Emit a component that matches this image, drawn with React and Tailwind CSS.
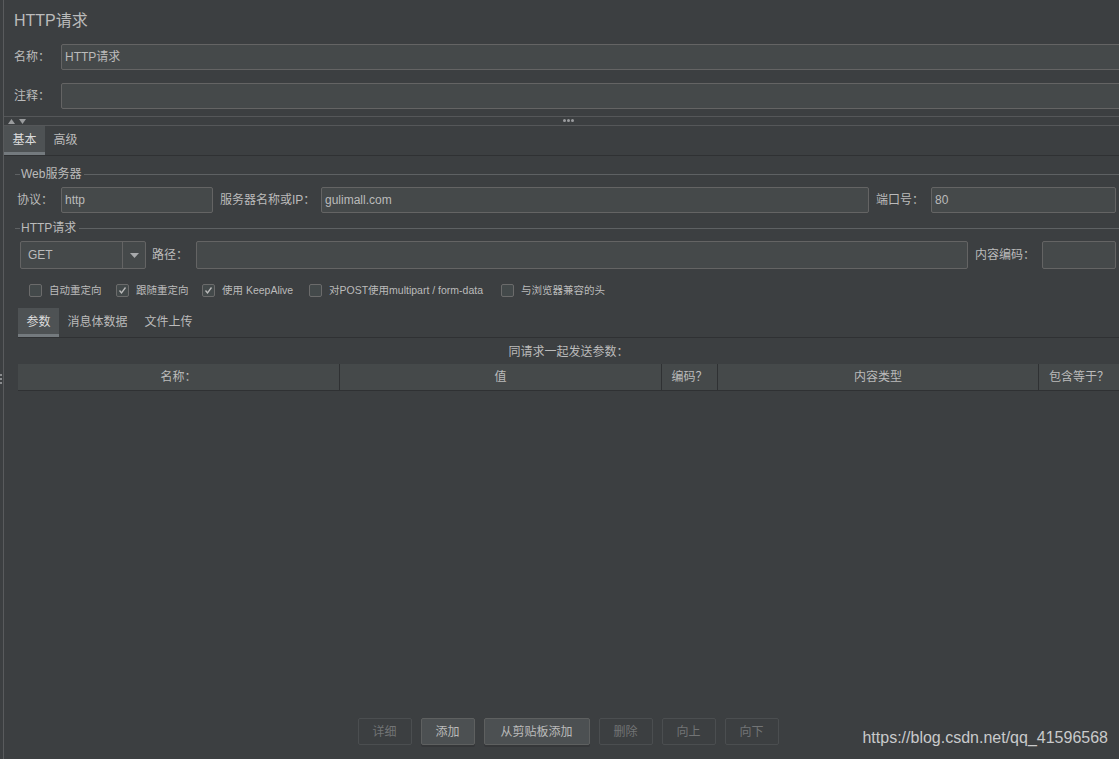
import React from 'react';

const Field = ({ className = '', value = '' }) => (
  <div className={`h-[26px] rounded-[2px] border border-[#646464] bg-[#45494a] px-[3px] text-[12px] leading-[24px] text-[#bbbbbb] ${className}`}>
    {value}
  </div>
);

const TitledLine = ({ title }) => (
  <div className="flex items-center h-[14px] pl-[11px]">
    <div className="w-[5px] h-px bg-[#5e6163]" />
    <span className="px-[1px] text-[12px] leading-[14px] text-[#bbbbbb]">{title}</span>
    <div className="flex-1 h-px bg-[#5e6163] ml-[2px]" />
  </div>
);

const Check = ({ checked, label, width }) => (
  <div className="flex items-center shrink-0" style={width ? { width } : undefined}>
    <div className="w-[13px] h-[13px] rounded-[2px] border border-[#6b6b6b] bg-[#43494a] flex items-center justify-center">
      {checked && (
        <svg width="9" height="9" viewBox="0 0 9 9">
          <path d="M1.5 4.5 L3.5 7 L7.5 1.5" fill="none" stroke="#bbbbbb" strokeWidth="1.3" />
        </svg>
      )}
    </div>
    <span className="ml-[7px] text-[10.5px] leading-[12px] text-[#bbbbbb] whitespace-nowrap">{label}</span>
  </div>
);

const Btn = ({ children, disabled, className = '' }) => (
  <div
    className={`h-[27px] rounded-[2px] border flex items-center justify-center text-[12px] ${
      disabled
        ? 'border-[#4b4e50] text-[#727475]'
        : 'border-[#5e6060] bg-[#4c5052] text-[#bbbbbb] shadow-[0_2px_0_#353739]'
    } ${className}`}
  >
    {children}
  </div>
);

export default function App() {
  const cols = [
    { label: '名称：', w: 'w-[321px]' },
    { label: '值', w: 'w-[322px]' },
    { label: '编码？', w: 'w-[56px]' },
    { label: '内容类型', w: 'w-[321px]' },
    { label: '包含等于？', w: 'flex-1' },
  ];

  return (
    <div className="relative w-[1119px] h-[759px] overflow-hidden bg-[#3c3f41] flex font-['Liberation_Sans','Noto_Sans_CJK_SC',sans-serif] text-[#bbbbbb]">
      {/* left gutter */}
      <div className="w-[3px] shrink-0" />
      <div className="w-px shrink-0 bg-[#595b5d]" />

      <div className="flex-1 flex flex-col min-w-0">
        <div className="pl-[10px] pt-[11px] h-[31px] text-[16px] leading-[20px]">HTTP请求</div>

        <div className="flex items-center mt-[13px] pl-[10px]">
          <span className="w-[47px] text-[12px]">名称：</span>
          <Field className="flex-1 mr-[-4px]" value="HTTP请求" />
        </div>
        <div className="flex items-center mt-[13px] pl-[10px]">
          <span className="w-[47px] text-[12px]">注释：</span>
          <Field className="flex-1 mr-[-4px]" />
        </div>

        {/* splitter */}
        <div className="h-px bg-[#555759] mt-[7px]" />
        <div className="h-[8px] relative flex items-center pl-[4px] gap-[4px]">
          <svg width="7" height="5" viewBox="0 0 7 5"><path d="M0 5 L3.5 0 L7 5Z" fill="#9a9c9e" /></svg>
          <svg width="7" height="5" viewBox="0 0 7 5"><path d="M0 0 L3.5 5 L7 0Z" fill="#9a9c9e" /></svg>
          <div className="absolute left-[559px] top-[2px] flex gap-[1px]">
            <div className="w-[3px] h-[3px] rounded-full bg-[#9a9c9e]" />
            <div className="w-[3px] h-[3px] rounded-full bg-[#9a9c9e]" />
            <div className="w-[3px] h-[3px] rounded-full bg-[#9a9c9e]" />
          </div>
        </div>
        <div className="h-px bg-[#555759]" />

        {/* main tabs */}
        <div className="flex h-[30px] border-b border-[#2f3133]">
          <div className="w-[41px] bg-[#4e5254] border-b-[3px] border-[#747a7e] text-center text-[12px] leading-[28px] text-[#dddddd]">基本</div>
          <div className="w-[41px] text-center text-[12px] leading-[28px]">高级</div>
        </div>

        <div className="mt-[11px]">
          <TitledLine title="Web服务器" />
        </div>
        <div className="flex items-center mt-[6px] pl-[13px] text-[12px]">
          <span className="w-[44px]">协议：</span>
          <Field className="w-[152px]" value="http" />
          <span className="ml-[7px] w-[101px]">服务器名称或IP：</span>
          <Field className="w-[548px]" value="gulimall.com" />
          <span className="ml-[7px] w-[55px]">端口号：</span>
          <Field className="w-[185px]" value="80" />
        </div>

        <div className="mt-[8px]">
          <TitledLine title="HTTP请求" />
        </div>
        <div className="flex items-center mt-[6px] pl-[16px] text-[12px]">
          <div className="w-[126px] h-[28px] rounded-[2px] border border-[#646464] bg-[#45494a] flex">
            <span className="flex-1 pl-[7px] leading-[26px]">GET</span>
            <div className="w-[23px] border-l border-[#646464] flex items-center justify-center">
              <svg width="9" height="5" viewBox="0 0 9 5"><path d="M0 0 L9 0 L4.5 5Z" fill="#a8aaac" /></svg>
            </div>
          </div>
          <span className="ml-[6px] w-[44px]">路径：</span>
          <Field className="w-[772px] h-[28px]" />
          <span className="ml-[7px] w-[67px]">内容编码：</span>
          <Field className="w-[74px] h-[28px]" />
        </div>

        <div className="flex items-center mt-[14px] pl-[25px] h-[14px]">
          <Check label="自动重定向" width={87} />
          <Check label="跟随重定向" checked width={86} />
          <Check label="使用 KeepAlive" checked width={107} />
          <Check label="对POST使用multipart / form-data" width={192} />
          <Check label="与浏览器兼容的头" />
        </div>

        {/* lower section */}
        <div className="flex-1 flex flex-col pl-[14px] mt-[11px]">
          <div className="flex h-[30px] border-b border-[#2f3133]">
            <div className="w-[41px] bg-[#4e5254] border-b-[3px] border-[#747a7e] text-center text-[12px] leading-[28px] text-[#dddddd]">参数</div>
            <div className="px-[8.5px] text-[12px] leading-[28px]">消息体数据</div>
            <div className="px-[8.5px] text-[12px] leading-[28px]">文件上传</div>
          </div>

          <div className="h-[26px] text-center text-[12px] leading-[28px]">同请求一起发送参数：</div>

          <div className="flex h-[27px] bg-[#45494a] border-b border-[#2f3133]">
            {cols.map((c, i) => (
              <div
                key={c.label}
                className={`${c.w} ${i > 0 ? 'border-l border-[#2f3133]' : ''} text-center text-[12px] leading-[27px]`}
              >
                {c.label}
              </div>
            ))}
          </div>

          <div className="flex-1" />

          <div className="flex justify-center gap-[9px] mb-[14px] pr-[1px]">
            <Btn disabled className="w-[54px]">详细</Btn>
            <Btn className="w-[54px]">添加</Btn>
            <Btn className="w-[106px]">从剪贴板添加</Btn>
            <Btn disabled className="w-[54px]">删除</Btn>
            <Btn disabled className="w-[54px]">向上</Btn>
            <Btn disabled className="w-[54px]">向下</Btn>
          </div>
        </div>
      </div>

      {/* left edge grip */}
      <div className="absolute left-0 top-[374px] flex flex-col gap-[2px]">
        <div className="w-[2px] h-[2px] bg-[#8a8c8e]" />
        <div className="w-[2px] h-[2px] bg-[#8a8c8e]" />
        <div className="w-[2px] h-[2px] bg-[#8a8c8e]" />
      </div>

      {/* watermark */}
      <div className="absolute right-[11px] bottom-[9px] font-['Liberation_Sans',sans-serif] text-[16px] text-[#c9cacb]">
        https://blog.csdn.net/qq_41596568
      </div>
    </div>
  );
}
